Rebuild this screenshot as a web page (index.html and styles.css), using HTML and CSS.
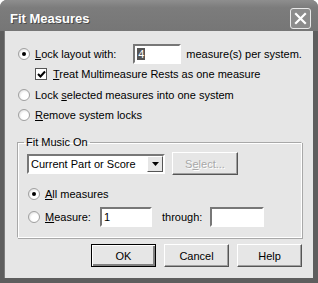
FILE: index.html
```html
<!DOCTYPE html>
<html lang="en">
<head>
    <meta charset="UTF-8">
    <title>Fit Measures</title>
    <link rel="stylesheet" href="styles.css">
</head>
<body>
    <div class="window">
        <div class="titlebar">
            <span class="title">Fit Measures</span>
            <span class="close">
                <svg width="13" height="13" viewBox="0 0 13 13"><path d="M2 2 L11 11 M11 2 L2 11" stroke="#fff" stroke-width="2.2" stroke-linecap="square"/></svg>
            </span>
        </div>
        <div class="body">
            <div class="row">
                <span class="radio checked"></span>
                <span class="label"><u>L</u>ock layout with:</span>
                <span class="input count"><span class="sel">4</span></span>
                <span class="label">measure(s) per system.</span>
            </div>
            <div class="row sub">
                <span class="check"><svg width="9" height="9" viewBox="0 0 9 9"><path d="M1 4 L3.5 6.5 L8 1.5" stroke="#000" stroke-width="2" fill="none"/></svg></span>
                <span class="label"><u>T</u>reat Multimeasure Rests as one measure</span>
            </div>
            <div class="row">
                <span class="radio"></span>
                <span class="label">Lock <u>s</u>elected measures into one system</span>
            </div>
            <div class="row">
                <span class="radio"></span>
                <span class="label"><u>R</u>emove system locks</span>
            </div>

            <fieldset class="group">
                <legend>Fit Music On</legend>
                <div class="row combo-row">
                    <span class="combo">
                        <span class="combo-text">Current Part or Score</span>
                        <span class="combo-btn"><svg width="7" height="4" viewBox="0 0 7 4"><path d="M0 0 H7 L3.5 4 Z" fill="#000"/></svg></span>
                    </span>
                    <span class="button disabled">S<u>e</u>lect...</span>
                </div>
                <div class="row">
                    <span class="radio checked"></span>
                    <span class="label"><u>A</u>ll measures</span>
                </div>
                <div class="row measure-row">
                    <span class="radio"></span>
                    <span class="label measure-label"><u>M</u>easure:</span>
                    <span class="input from">1</span>
                    <span class="label through">through:</span>
                    <span class="input to"></span>
                </div>
            </fieldset>

            <div class="buttons">
                <span class="button default">OK</span>
                <span class="button">Cancel</span>
                <span class="button">Help</span>
            </div>
        </div>
    </div>
</body>
</html>
```

FILE: styles.css
```css
body {
    margin: 0;
    background: #ffffff;
    font-family: "Liberation Sans", Arial, sans-serif;
    font-size: 11px;
    color: #000;
}
.window {
    width: 318px;
    height: 283px;
    box-sizing: border-box;
    background: #5e5e5e;
    border-radius: 7px 7px 0 0;
    padding: 0 5px 5px 4px;
    display: flex;
    flex-direction: column;
}
.titlebar {
    height: 31px;
    box-sizing: border-box;
    display: flex;
    align-items: center;
    justify-content: space-between;
    padding: 6px 7px 0 10px;
    margin: 0 -5px 0 -4px;
    background: linear-gradient(#8e8e8e, #7c7c7c 25%, #767676);
    border-radius: 7px 7px 0 0;
}
.title {
    color: #fff;
    font-weight: bold;
    font-size: 13px;
    text-shadow: 1px 1px 0 #4a4a4a;
}
.close {
    width: 21px;
    height: 21px;
    box-sizing: border-box;
    border: 1px solid #e8e8e8;
    border-radius: 3px;
    background: #8c8c8c;
    display: flex;
    align-items: center;
    justify-content: center;
}
.body {
    flex: 1;
    background: #e6e6e6;
    padding: 13px 0 0 13px;
    border-left: 1px solid #7d7d7d;
}
.row {
    display: flex;
    align-items: center;
    height: 20px;
}
.row.sub {
    padding-left: 17px;
    margin-bottom: 1px;
}
.label {
    white-space: nowrap;
}
u {
    text-decoration: underline;
    text-underline-offset: 1px;
}
.radio {
    width: 12px;
    height: 12px;
    box-sizing: border-box;
    border-radius: 50%;
    border: 1px solid #a0a0a0;
    background: radial-gradient(circle at 60% 60%, #ffffff 40%, #d0d0d0);
    margin-right: 5px;
    display: flex;
    align-items: center;
    justify-content: center;
}
.radio.checked::after {
    content: "";
    width: 4px;
    height: 4px;
    border-radius: 50%;
    background: #000;
}
.check {
    width: 12px;
    height: 12px;
    box-sizing: border-box;
    border: 1px solid #555;
    background: #fff;
    margin-right: 6px;
    display: flex;
    align-items: center;
    justify-content: center;
}
.input {
    height: 20px;
    box-sizing: border-box;
    background: #fff;
    border: 2px solid;
    border-color: #777 #fff #fff #777;
    display: flex;
    align-items: center;
    padding-left: 2px;
}
.input.count {
    width: 48px;
    margin: 0 5px 0 17px;
}
.sel {
    background: #555;
    color: #fff;
    padding: 0 1px;
}
.group {
    margin: 11px 11px 0 -1px;
    padding: 5px 9px 10px 9px;
    border: 1px solid;
    border-color: #a8a8a8 #fff #fff #a8a8a8;
    box-shadow: inset 1px 1px 0 #fff, 1px 1px 0 #a8a8a8;
}
.group legend {
    padding: 0 2px;
    margin-left: -3px;
}
.group .radio {
    margin-left: 1px;
}
.combo-row {
    height: 21px;
    margin-bottom: 10px;
}
.combo {
    width: 138px;
    height: 20px;
    box-sizing: border-box;
    background: #fff;
    border: 2px solid;
    border-color: #777 #fff #fff #777;
    display: flex;
    align-items: center;
    margin-right: 7px;
}
.combo-text {
    flex: 1;
    padding-left: 2px;
}
.combo-btn {
    width: 16px;
    height: 16px;
    box-sizing: border-box;
    background: #e6e6e6;
    border: 1px solid;
    border-color: #fff #555 #555 #fff;
    display: flex;
    align-items: center;
    justify-content: center;
}
.button {
    width: 66px;
    height: 23px;
    box-sizing: border-box;
    background: #e6e6e6;
    border: 1px solid;
    border-color: #fff #555 #555 #fff;
    box-shadow: inset -1px -1px 0 #a0a0a0;
    display: flex;
    align-items: center;
    justify-content: center;
}
.button.disabled {
    color: #a8a8a8;
    text-shadow: 1px 1px 0 #fff;
}
.button.default {
    border: 1px solid #000;
    box-shadow: inset 1px 1px 0 #fff, inset -2px -2px 0 #808080;
}
.measure-row {
    margin-top: 3px;
}
.measure-label {
    width: 55px;
}
.input.from {
    width: 52px;
}
.through {
    margin: 0 8px 0 10px;
}
.input.to {
    width: 54px;
}
.buttons {
    display: flex;
    justify-content: flex-end;
    gap: 8px;
    margin: 6px 11px 0 0;
}
.buttons .button {
    width: 65px;
}
```
